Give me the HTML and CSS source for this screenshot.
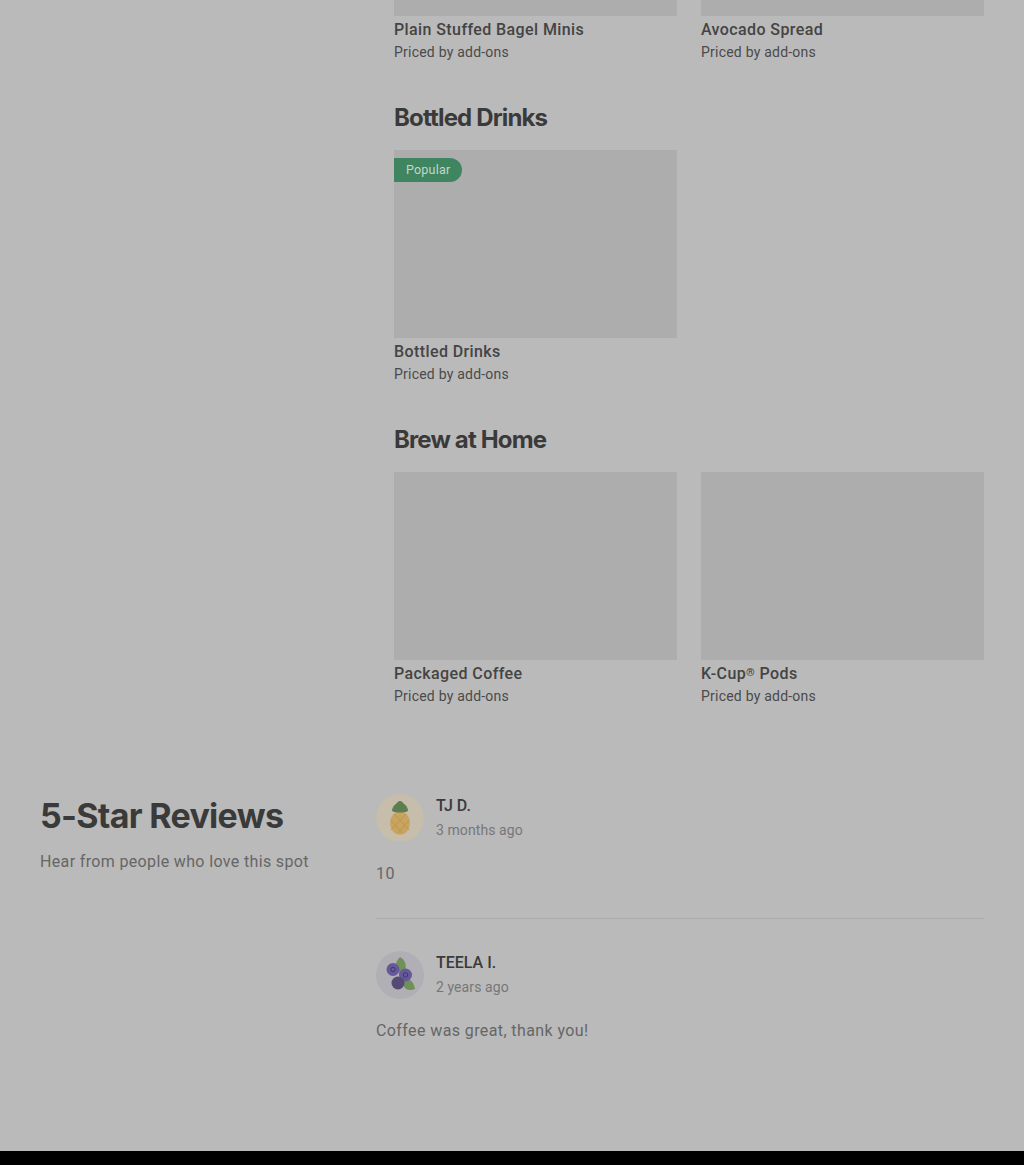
FILE: index.html
```html
<!DOCTYPE html>
<html lang="en">
<head>
<meta charset="UTF-8" />
<meta name="viewport" content="width=device-width, initial-scale=1" />
<title>Menu and Reviews</title>
<link rel="stylesheet" href="styles.css">
</head>
<body>

<main class="page">
  <div class="menu">
    <section class="menu-section first">
      <div class="item-grid">
        <div class="item">
          <div class="item-img cut"></div>
          <div class="item-name">Plain Stuffed Bagel Minis</div>
          <div class="item-price">Priced by add-ons</div>
        </div>
        <div class="item">
          <div class="item-img cut"></div>
          <div class="item-name">Avocado Spread</div>
          <div class="item-price">Priced by add-ons</div>
        </div>
      </div>
    </section>

    <section class="menu-section">
      <h2>Bottled Drinks</h2>
      <div class="item-grid">
        <div class="item">
          <div class="item-img">
            <span class="badge">Popular</span>
          </div>
          <div class="item-name">Bottled Drinks</div>
          <div class="item-price">Priced by add-ons</div>
        </div>
      </div>
    </section>

    <section class="menu-section">
      <h2>Brew at Home</h2>
      <div class="item-grid">
        <div class="item">
          <div class="item-img"></div>
          <div class="item-name">Packaged Coffee</div>
          <div class="item-price">Priced by add-ons</div>
        </div>
        <div class="item">
          <div class="item-img"></div>
          <div class="item-name">K-Cup<span class="reg">®</span> Pods</div>
          <div class="item-price">Priced by add-ons</div>
        </div>
      </div>
    </section>
  </div>

  <section class="reviews">
    <div class="reviews-intro">
      <h2>5-Star Reviews</h2>
      <p>Hear from people who love this spot</p>
    </div>
    <div class="reviews-list">
      <article class="review">
        <div class="review-head">
          <svg class="avatar" viewBox="0 0 48 48">
            <circle cx="24" cy="24" r="24" fill="#c6bdaa"/>
            <ellipse cx="24" cy="29" rx="10" ry="11.500" fill="#c9a45f"/>
            <path d="M15 26l11 13M18 20l15 16M33 26L22 39M30 20L15 36" stroke="#bb9650" stroke-width="1" fill="none"/>
            <path d="M24 7c2 0 3 2 4 3 2 1 4 4 4 7-4 2-12 2-16 0 0-3 2-6 4-7 1-1 2-3 4-3z" fill="#5b7d50"/>
          </svg>
          <div>
            <div class="review-name">TJ D.</div>
            <div class="review-date">3 months ago</div>
          </div>
        </div>
        <p class="review-text">10</p>
      </article>

      <article class="review">
        <div class="review-head">
          <svg class="avatar" viewBox="0 0 48 48">
            <circle cx="24" cy="24" r="24" fill="#b0afb5"/>
            <path d="M24 6c5 3 7 8 5 13l-5 4-4-6c-1-4 1-8 4-11z" fill="#6f9158"/>
            <path d="M27 31c5-4 10-3 12 7-6 2-12 1-12-7z" fill="#6f9158"/>
            <circle cx="17" cy="18.500" r="6.500" fill="#65599a"/>
            <circle cx="17" cy="18.500" r="2.200" fill="none" stroke="#40386c"/>
            <circle cx="29.500" cy="24" r="6.500" fill="#65599a"/>
            <circle cx="29.500" cy="24" r="2.200" fill="none" stroke="#40386c"/>
            <circle cx="22" cy="32" r="6.500" fill="#554a75"/>
          </svg>
          <div>
            <div class="review-name">TEELA I.</div>
            <div class="review-date">2 years ago</div>
          </div>
        </div>
        <p class="review-text">Coffee was great, thank you!</p>
      </article>
    </div>
  </section>
</main>

<footer class="footer"></footer>

</body>
</html>
```

FILE: styles.css
```css
* {
  box-sizing: border-box;
}
body {
  margin: 0;
  background-color: #bababa;
  font-family: Roboto, Arial, sans-serif;
  color: #444;
}
.page {
  padding: 0 40px;
  height: 1151px;
}
.menu {
  margin-left: 354px;
}
.menu-section {
  padding-top: 38px;
}
.menu-section.first {
  padding-top: 0;
}
.menu-section h2 {
  margin: 0 0 14px;
  font-family: Inter, Arial, sans-serif;
  font-size: 24px;
  line-height: 36px;
  font-weight: 700;
  letter-spacing: -0.85px;
  color: #3a3a3a;
}
.item-grid {
  display: grid;
  grid-template-columns: 283px 283px;
  gap: 24px;
}
.item-img {
  position: relative;
  height: 188px;
  background-color: #adadad;
}
.item-img.cut {
  height: 16px;
}
.badge {
  position: absolute;
  top: 8px;
  left: 0;
  padding: 0 12px;
  height: 24px;
  line-height: 24px;
  font-size: 12.5px;
  letter-spacing: 0.2px;
  color: #c5d6cc;
  background-color: #3f8560;
  border-radius: 0 12px 12px 0;
}
.item-name {
  margin-top: 4px;
  font-size: 16px;
  line-height: 20px;
  font-weight: 500;
  letter-spacing: 0.4px;
}
.reg {
  font-size: 11px;
  line-height: 0;
  vertical-align: 3px;
}
.item-price {
  margin-top: 2px;
  font-size: 14px;
  line-height: 20px;
  letter-spacing: 0.22px;
  color: #4a4a4a;
}
.reviews {
  display: flex;
  margin-top: 88px;
}
.reviews-intro {
  width: 336px;
  flex: none;
}
.reviews-intro h2 {
  margin: 0;
  font-family: Inter, Arial, sans-serif;
  font-size: 34px;
  line-height: 44px;
  font-weight: 700;
  letter-spacing: -0.7px;
  color: #3a3a3a;
}
.reviews-intro p {
  margin: 12px 0 0;
  font-size: 16px;
  line-height: 24px;
  letter-spacing: 0.35px;
  color: #666;
}
.reviews-list {
  flex: 1;
}
.review {
  padding-bottom: 32px;
  margin-bottom: 32px;
  border-bottom: 1px solid #aaa;
}
.review:last-child {
  border-bottom: none;
  margin-bottom: 0;
}
.review-head {
  display: flex;
  align-items: center;
  gap: 12px;
}
.avatar {
  width: 48px;
  height: 48px;
  flex: none;
}
.review-name {
  font-size: 16px;
  line-height: 20px;
  font-weight: 500;
  color: #3a3a3a;
}
.review-date {
  margin-top: 4px;
  font-size: 14px;
  line-height: 20px;
  letter-spacing: 0.08px;
  color: #777;
}
.review-text {
  margin: 20px 0 0;
  font-size: 16px;
  line-height: 24px;
  letter-spacing: 0.4px;
  color: #666;
}
.footer {
  height: 14px;
  background-color: #000;
}
```
